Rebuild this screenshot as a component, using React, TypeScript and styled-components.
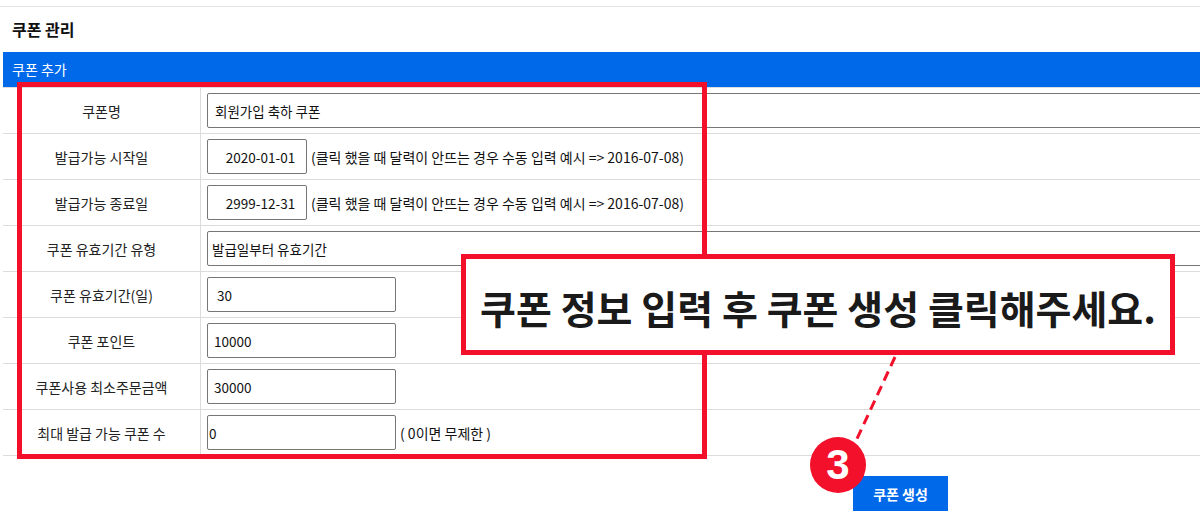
import React from 'react';
import styled, {createGlobalStyle} from 'styled-components';

const GlobalStyle = createGlobalStyle`
  body {
    margin: 0;
    overflow: hidden;
    background: #fff;
    font-family: "Noto Sans CJK KR", "Noto Sans", sans-serif;
    color: #222;
  }
`

type Field = {
    label: string;
    kind: 'text' | 'date' | 'select' | 'number';
    value: string;
    pad?: number;
    note?: string;
}

const fields: Field[] = [
    {label: '쿠폰명', kind: 'text', value: '회원가입 축하 쿠폰'},
    {label: '발급가능 시작일', kind: 'date', value: '2020-01-01', note: '(클릭 했을 때 달력이 안뜨는 경우 수동 입력 예시 => 2016-07-08)'},
    {label: '발급가능 종료일', kind: 'date', value: '2999-12-31', note: '(클릭 했을 때 달력이 안뜨는 경우 수동 입력 예시 => 2016-07-08)'},
    {label: '쿠폰 유효기간 유형', kind: 'select', value: '발급일부터 유효기간'},
    {label: '쿠폰 유효기간(일)', kind: 'number', value: '30', pad: 9},
    {label: '쿠폰 포인트', kind: 'number', value: '10000', pad: 6},
    {label: '쿠폰사용 최소주문금액', kind: 'number', value: '30000', pad: 6},
    {label: '최대 발급 가능 쿠폰 수', kind: 'number', value: '0', pad: 1, note: '( 0이면 무제한 )'},
];

const renderControl = (f: Field) => {
    if (f.kind === 'select') {
        return (
            <SelectBox defaultValue={f.value}>
                <option>{f.value}</option>
            </SelectBox>
        );
    }
    return <TextInput $kind={f.kind} $pad={f.pad} defaultValue={f.value}/>;
};

export default function App() {
    return (
        <Page>
            <GlobalStyle/>
            <TopRule/>
            <PageTitle>쿠폰 관리</PageTitle>
            <Panel>
                <PanelHeader>쿠폰 추가</PanelHeader>
                <FormTable>
                    {fields.map((f) => (
                        <Row key={f.label}>
                            <LabelCell>{f.label}</LabelCell>
                            <ValueCell>
                                {renderControl(f)}
                                {f.note && <Note>{f.note}</Note>}
                            </ValueCell>
                        </Row>
                    ))}
                </FormTable>
                <ButtonRow>
                    <CreateButton>쿠폰 생성</CreateButton>
                </ButtonRow>
            </Panel>

            <FocusFrame/>
            <Callout>쿠폰 정보 입력 후 쿠폰 생성 클릭해주세요.</Callout>
            <Connector width="60" height="100" viewBox="0 0 60 100">
                <line x1="49" y1="2" x2="9" y2="88" stroke="#f2102b" strokeWidth="3" strokeDasharray="10 6"/>
            </Connector>
            <StepBadge>3</StepBadge>
        </Page>
    );
}

const Page = styled.div`
  position: relative;
  width: 1800px;
`

const TopRule = styled.div`
  height: 6px;
  border-bottom: 1px solid #e2e2e2;
`

const PageTitle = styled.h1`
  margin: 0;
  padding-left: 12px;
  height: 45px;
  line-height: 45px;
  font-size: 16px;
  font-weight: 700;
  color: #111;
`

const Panel = styled.section`
  margin-left: 3px;
  width: 1795px;
`

const PanelHeader = styled.div`
  height: 35px;
  line-height: 35px;
  padding-left: 9px;
  background: #0069ea;
  color: #fff;
  font-size: 14px;
`

const FormTable = styled.div`
  border-top: 1px solid #dcdcdc;
`

const Row = styled.div`
  display: grid;
  grid-template-columns: 198px 1fr;
  height: 46px;
  box-sizing: border-box;
  border-bottom: 1px solid #dcdcdc;
`

const LabelCell = styled.div`
  display: flex;
  align-items: center;
  justify-content: center;
  border-right: 1px solid #dcdcdc;
  font-size: 14px;
  color: #222;
`

const ValueCell = styled.div`
  display: flex;
  align-items: center;
  gap: 4px;
  padding-left: 6px;
`

const TextInput = styled.input<{ $kind: string; $pad?: number }>`
  box-sizing: border-box;
  height: 35px;
  width: ${p => p.$kind === 'text' ? '1100px' : p.$kind === 'date' ? '100px' : '189px'};
  padding: 0 0 0 ${p => p.$pad ?? 7}px;
  border: 1px solid #767676;
  border-radius: 2px;
  font-family: inherit;
  font-size: 13.5px;
  color: #111;
  text-align: ${p => p.$kind === 'date' ? 'center' : 'left'};
  outline: none;
`

const SelectBox = styled.select`
  box-sizing: border-box;
  height: 35px;
  width: 1100px;
  padding: 0 0 0 4px;
  border: 1px solid #767676;
  border-radius: 2px;
  appearance: none;
  background: #fff;
  font-family: inherit;
  font-size: 13.5px;
  color: #111;
`

const Note = styled.span`
  font-size: 14px;
  color: #111;
  white-space: nowrap;
`

const ButtonRow = styled.div`
  display: flex;
  justify-content: center;
  padding-top: 20px;
`

const CreateButton = styled.button`
  width: 95px;
  height: 35px;
  border: none;
  background: #0069ea;
  color: #fff;
  font-family: inherit;
  font-size: 14px;
  font-weight: 700;
`

const FocusFrame = styled.div`
  position: absolute;
  left: 17px;
  top: 82px;
  width: 690px;
  height: 377px;
  box-sizing: border-box;
  border: 5px solid #f2102b;
  pointer-events: none;
`

const Callout = styled.div`
  position: absolute;
  left: 461px;
  top: 254px;
  width: 714px;
  height: 101px;
  box-sizing: border-box;
  border: 5px solid #f2102b;
  background: #fff;
  display: flex;
  align-items: center;
  justify-content: center;
  padding-top: 4px;
  font-size: 39px;
  font-weight: 700;
  color: #1a1a1a;
  white-space: nowrap;
`

const Connector = styled.svg`
  position: absolute;
  left: 846px;
  top: 355px;
`

const StepBadge = styled.div`
  position: absolute;
  left: 810px;
  top: 437px;
  width: 56px;
  height: 56px;
  border-radius: 50%;
  background: #f2102b;
  color: #fff;
  display: flex;
  align-items: center;
  justify-content: center;
  font-family: "Liberation Sans", Arial, sans-serif;
  font-size: 42px;
  font-weight: 700;
`
